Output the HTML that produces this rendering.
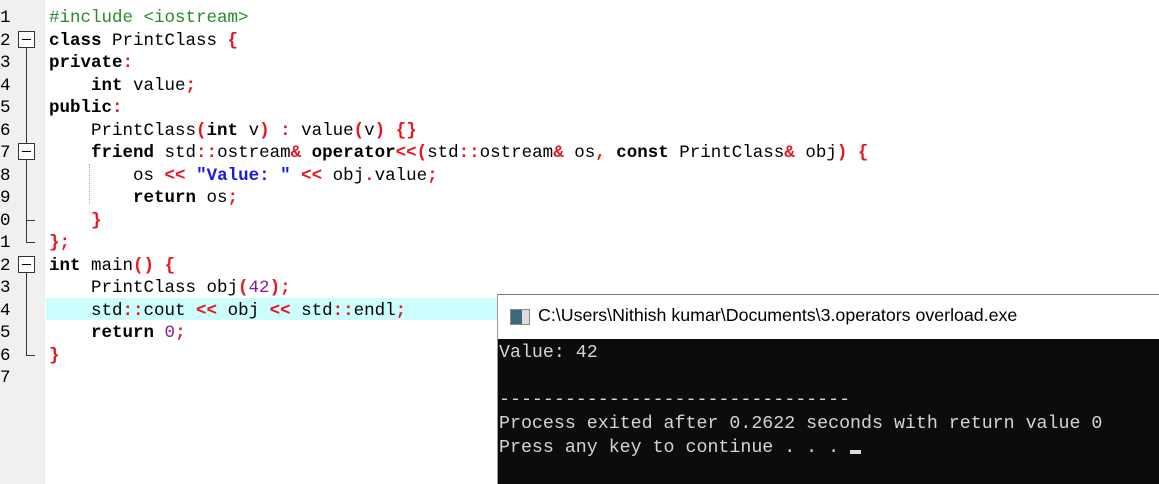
<!DOCTYPE html>
<html><head><style>
body{margin:0;width:1159px;height:484px;overflow:hidden;background:#fff;position:relative;font-family:"Liberation Mono",monospace}
.g{position:absolute;left:0;top:0;width:45px;height:484px;background:#f0f0f0}
.n{position:absolute;left:0px;font-size:17.5px;color:#000;font-family:"Liberation Mono",monospace;line-height:22px}
.l{position:absolute;left:49px;font-size:17.5px;white-space:pre;color:#000;line-height:22px}
b{font-weight:bold}
.r{color:#e8141e;font-weight:bold}
.s{color:#1a1adc;font-weight:bold}
.p{color:#8a1a9a}
.c{color:#2a8a2a}
.box{position:absolute;left:18px;width:17px;height:17px;border:1px solid #333;background:#fff;box-sizing:border-box}
.box:after{content:"";position:absolute;left:3px;right:3px;top:7px;height:1px;background:#000}
.vl{position:absolute;left:26px;width:1px;background:#333}
.hl{position:absolute;height:1px;background:#333;left:26px;width:9px}
</style></head><body>
<div class="g"></div>
<div style="position:absolute;left:46px;top:298px;width:452px;height:22px;background:#ccfcfc"></div>
<div style="position:absolute;left:89px;top:164px;width:0;height:40px;border-left:1px dotted #aaa"></div>
<div class="n" style="top:7px">1</div><div class="n" style="top:30px">2</div><div class="n" style="top:52px">3</div><div class="n" style="top:75px">4</div><div class="n" style="top:97px">5</div><div class="n" style="top:120px">6</div><div class="n" style="top:142px">7</div><div class="n" style="top:165px">8</div><div class="n" style="top:187px">9</div><div class="n" style="top:210px">0</div><div class="n" style="top:232px">1</div><div class="n" style="top:255px">2</div><div class="n" style="top:277px">3</div><div class="n" style="top:300px">4</div><div class="n" style="top:322px">5</div><div class="n" style="top:345px">6</div><div class="n" style="top:367px">7</div>
<div class="vl" style="top:47px;height:195px"></div>
<div class="hl" style="top:220px"></div><div class="hl" style="top:242px"></div>
<div class="box" style="top:31px"></div><div class="box" style="top:143px"></div>
<div class="vl" style="top:270px;height:85px"></div><div class="hl" style="top:355px"></div>
<div class="box" style="top:256px"></div>
<div class="l" style="top:7px"><span class="c">#include &lt;iostream&gt;</span></div>
<div class="l" style="top:30px"><b>class</b> PrintClass <span class="r">{</span></div>
<div class="l" style="top:52px"><b>private</b><span class="r">:</span></div>
<div class="l" style="top:75px">    <b>int</b> value<span class="r">;</span></div>
<div class="l" style="top:97px"><b>public</b><span class="r">:</span></div>
<div class="l" style="top:120px">    PrintClass<span class="r">(</span><b>int</b> v<span class="r">)</span> <span class="r">:</span> value<span class="r">(</span>v<span class="r">)</span> <span class="r">{}</span></div>
<div class="l" style="top:142px">    <b>friend</b> std<span class="r">::</span>ostream<span class="r">&amp;</span> <b>operator</b><span class="r">&lt;&lt;(</span>std<span class="r">::</span>ostream<span class="r">&amp;</span> os<span class="r">,</span> <b>const</b> PrintClass<span class="r">&amp;</span> obj<span class="r">)</span> <span class="r">{</span></div>
<div class="l" style="top:165px">        os <span class="r">&lt;&lt;</span> <span class="s">"Value: "</span> <span class="r">&lt;&lt;</span> obj<span class="r">.</span>value<span class="r">;</span></div>
<div class="l" style="top:187px">        <b>return</b> os<span class="r">;</span></div>
<div class="l" style="top:210px">    <span class="r">}</span></div>
<div class="l" style="top:232px"><span class="r">};</span></div>
<div class="l" style="top:255px"><b>int</b> main<span class="r">()</span> <span class="r">{</span></div>
<div class="l" style="top:277px">    PrintClass obj<span class="r">(</span><span class="p">42</span><span class="r">);</span></div>
<div class="l" style="top:300px">    std<span class="r">::</span>cout <span class="r">&lt;&lt;</span> obj <span class="r">&lt;&lt;</span> std<span class="r">::</span>endl<span class="r">;</span></div>
<div class="l" style="top:322px">    <b>return</b> <span class="p">0</span><span class="r">;</span></div>
<div class="l" style="top:345px"><span class="r">}</span></div>
<div style="position:absolute;left:497px;top:294px;width:662px;height:190px;border-top:1px solid #777;border-left:1px solid #999;box-sizing:border-box;background:#0c0c0c">
<div style="height:44px;background:#fff;position:relative">
<div style="position:absolute;left:12px;top:14px;width:18px;height:14px;border:1px solid #888;background:linear-gradient(90deg,#3a6a7a 60%,#ddd 60%)"></div>
<div style="position:absolute;left:40px;top:10px;font-family:'Liberation Sans',sans-serif;font-size:17.8px;color:#000">C:\Users\Nithish kumar\Documents\3.operators overload.exe</div>
</div>
<div style="position:absolute;left:1px;top:47px;font-family:'Liberation Mono',monospace;font-size:18.3px;line-height:23.7px;color:#d4d4d4;white-space:pre">Value: 42

--------------------------------
Process exited after 0.2622 seconds with return value 0
Press any key to continue . . . <span style="display:inline-block;width:11px;height:4px;background:#ddd;vertical-align:-2px"></span></div>
</div>
</body></html>
